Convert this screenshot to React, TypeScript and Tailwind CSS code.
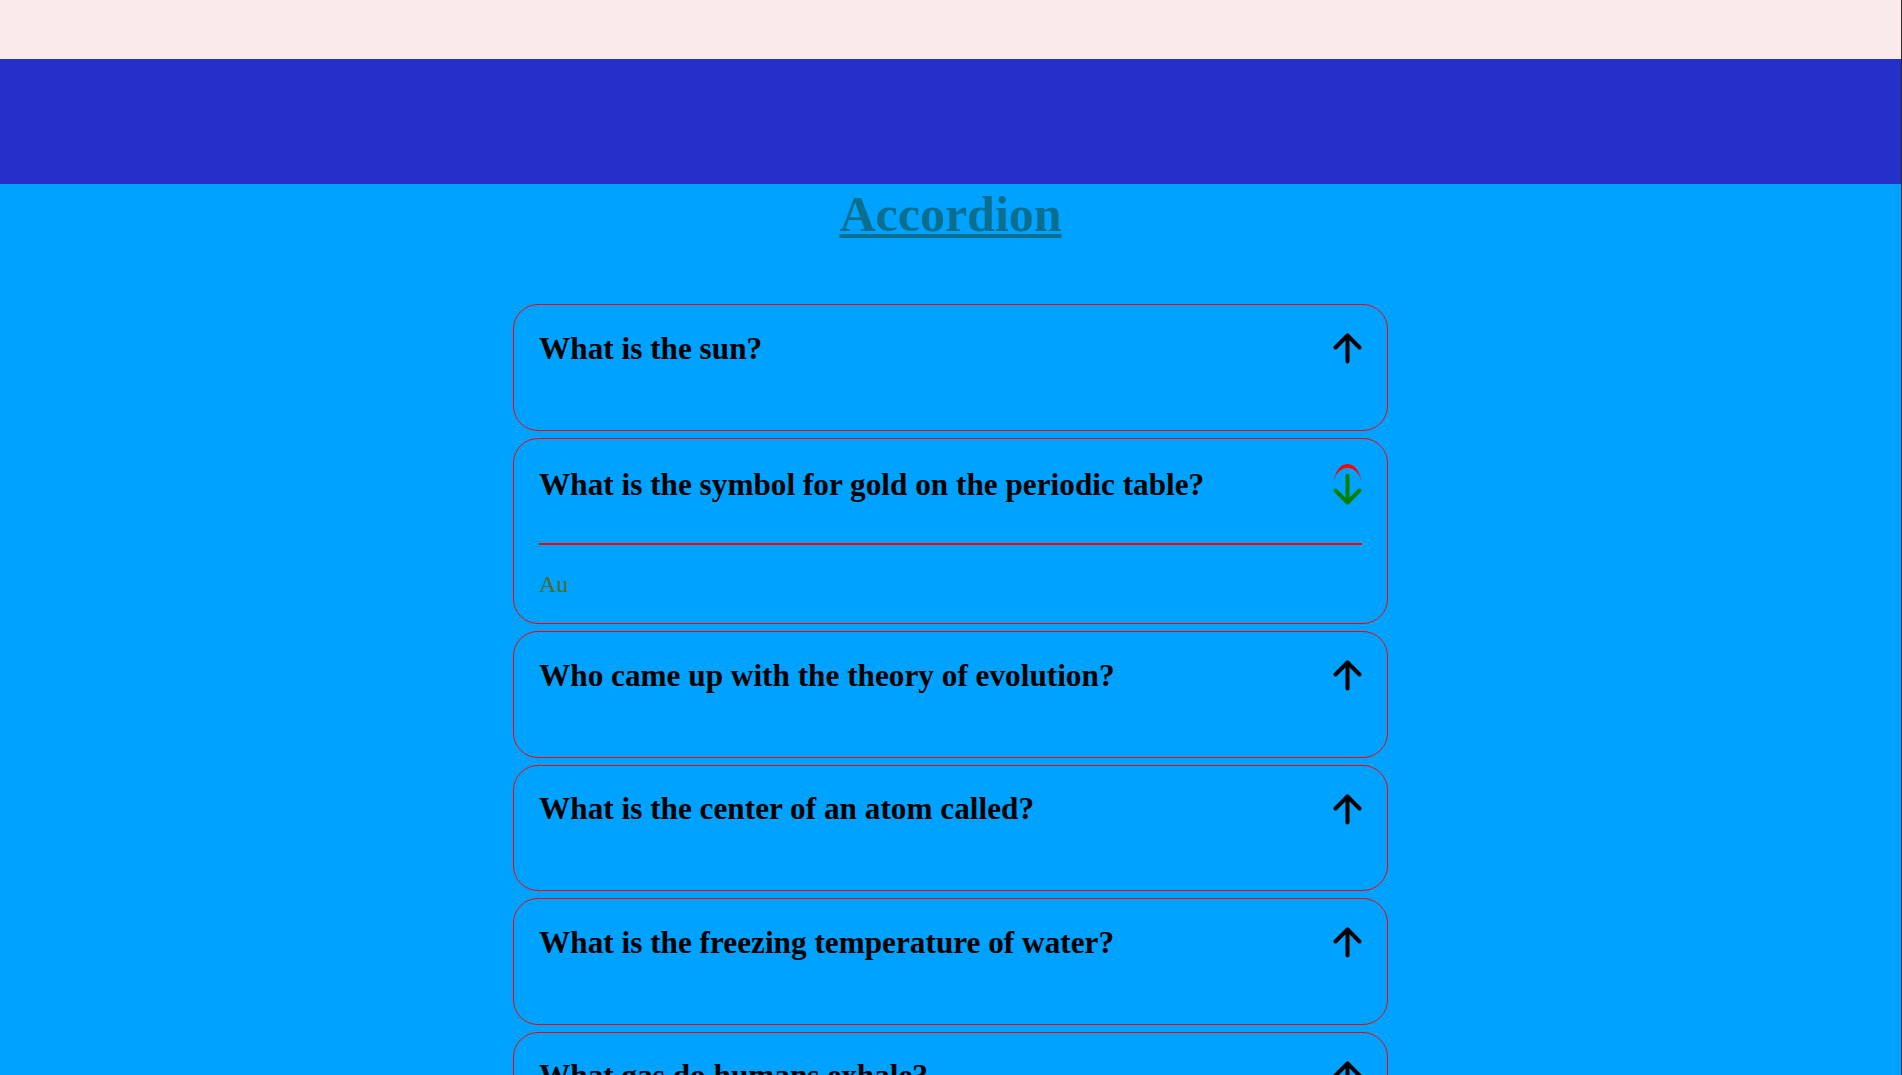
import { useState } from "react";

const items = [
  { q: "What is the sun?", a: "A star" },
  { q: "What is the symbol for gold on the periodic table?", a: "Au" },
  { q: "Who came up with the theory of evolution?", a: "Charles Darwin" },
  { q: "What is the center of an atom called?", a: "The nucleus" },
  { q: "What is the freezing temperature of water?", a: "0°C" },
  { q: "What gas do humans exhale?", a: "Carbon dioxide" },
];

function ArrowUp() {
  return (
    <svg width="29" height="31" viewBox="0 0 29 31" fill="none" stroke="#000" strokeWidth="4" strokeLinecap="round" strokeLinejoin="round">
      <path d="M14.5 2.5V28.5" />
      <path d="M2.5 14.5L14.5 2.5L26.5 14.5" />
    </svg>
  );
}

function ArrowOpen() {
  return (
    <svg width="29" height="42" viewBox="0 0 29 42" fill="none">
      <path d="M0.5 21A14 21 0 0 1 28.5 21A14 17 0 0 0 0.5 21Z" fill="#ff0000" />
      <g stroke="#008000" strokeWidth="4" strokeLinecap="round" strokeLinejoin="round">
        <path d="M14.5 11.5V38.5" />
        <path d="M2.5 26.5L14.5 38.5L26.5 26.5" />
      </g>
    </svg>
  );
}

export default function App() {
  const [open, setOpen] = useState(1);

  return (
    <div className="min-h-screen bg-[#00a2ff] border-r border-[#2a2a2a] font-['Liberation_Serif','Times_New_Roman',serif]">
      <div className="h-[59px] bg-[#f8ebea]" />
      <div className="h-[125px] bg-[#2530cb]" />
      <h1 className="m-0 pt-[1px] text-center text-[50px] font-bold leading-[normal] text-[#0a6f8e] underline decoration-[4px] underline-offset-[3px]">
        Accordion
      </h1>
      <div className="mt-[61px] mx-auto w-[875px] flex flex-col gap-[7px] pb-10">
        {items.map((item, i) => {
          const isOpen = open === i;
          return (
            <div key={item.q} className="border border-[#ff0000] rounded-[25px] px-[25px] pt-[25.5px] pb-[25px]">
              <button
                type="button"
                onClick={() => setOpen(isOpen ? -1 : i)}
                className="w-full flex items-center justify-between text-left mb-[38px] cursor-pointer"
              >
                <span className="text-[31.25px] font-bold leading-[normal] text-black">{item.q}</span>
                {isOpen ? <ArrowOpen /> : <ArrowUp />}
              </button>
              {isOpen && (
                <div className="-mt-[1px]">
                  <div className="h-[2px] bg-[#ff0000]" />
                  <p className="mt-[26px] text-[24px] leading-[normal] text-[#4f6b2c]">{item.a}</p>
                </div>
              )}
            </div>
          );
        })}
      </div>
    </div>
  );
}
